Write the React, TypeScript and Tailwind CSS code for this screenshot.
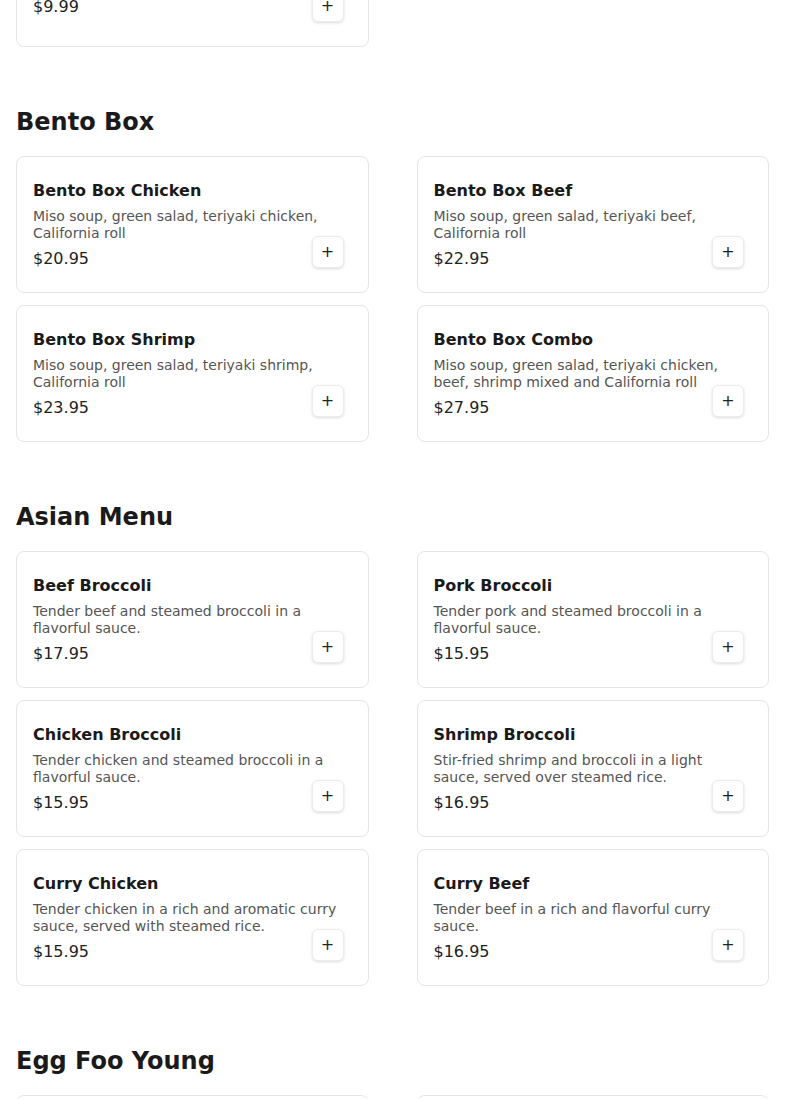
import React from 'react';

type Item = { name: string; desc: string; price: string };

const sections: { title: string; items: Item[] }[] = [
    {
        title: 'Bento Box',
        items: [
            { name: 'Bento Box Chicken', desc: 'Miso soup, green salad, teriyaki chicken, California roll', price: '$20.95' },
            { name: 'Bento Box Beef', desc: 'Miso soup, green salad, teriyaki beef, California roll', price: '$22.95' },
            { name: 'Bento Box Shrimp', desc: 'Miso soup, green salad, teriyaki shrimp, California roll', price: '$23.95' },
            { name: 'Bento Box Combo', desc: 'Miso soup, green salad, teriyaki chicken, beef, shrimp mixed and California roll', price: '$27.95' },
        ],
    },
    {
        title: 'Asian Menu',
        items: [
            { name: 'Beef Broccoli', desc: 'Tender beef and steamed broccoli in a flavorful sauce.', price: '$17.95' },
            { name: 'Pork Broccoli', desc: 'Tender pork and steamed broccoli in a flavorful sauce.', price: '$15.95' },
            { name: 'Chicken Broccoli', desc: 'Tender chicken and steamed broccoli in a flavorful sauce.', price: '$15.95' },
            { name: 'Shrimp Broccoli', desc: 'Stir-fried shrimp and broccoli in a light sauce, served over steamed rice.', price: '$16.95' },
            { name: 'Curry Chicken', desc: 'Tender chicken in a rich and aromatic curry sauce, served with steamed rice.', price: '$15.95' },
            { name: 'Curry Beef', desc: 'Tender beef in a rich and flavorful curry sauce.', price: '$16.95' },
        ],
    },
    {
        title: 'Egg Foo Young',
        items: [
            { name: 'Chicken Egg Foo Young', desc: 'Fluffy omelette with chicken and vegetables, topped with brown gravy.', price: '$14.95' },
            { name: 'Shrimp Egg Foo Young', desc: 'Fluffy omelette with shrimp and vegetables, topped with brown gravy.', price: '$15.95' },
        ],
    },
];

const MenuCard: React.FC<{ item: Item; last?: boolean }> = ({ item, last }) => (
    <div className={`relative rounded-lg border border-[#e5e5e5] bg-white px-4 pt-[22px] ${last ? 'pb-[27px]' : 'pb-[21px]'}`}>
        <h3 className="text-base leading-6 font-bold text-[#1a1a1a]">{item.name}</h3>
        <p className="mt-[5px] pr-2 text-sm leading-[17px] text-[#555555]">{item.desc}</p>
        <p className="mt-[5px] text-base leading-6 text-[#222222]">{item.price}</p>
        <button className="absolute right-6 bottom-6 flex h-8 w-8 items-center justify-center rounded-md border border-[#ececec] bg-white text-base leading-none text-[#222222] shadow-[0_1px_3px_rgba(0,0,0,0.14)]">
            +
        </button>
    </div>
);

export default function App() {
    return (
        <div className="min-h-screen overflow-hidden bg-white px-4 pb-10 font-['DejaVu_Sans',sans-serif]">
            <div className="-mt-[96px] grid grid-cols-2 gap-x-12">
                <MenuCard last item={{ name: 'Vegetable Lo Mein', desc: 'Soft egg noodles stir-fried with fresh mixed vegetables.', price: '$9.99' }} />
            </div>
            {sections.map(section => (
                <section key={section.title} className="mt-[57px]">
                    <h2 className="mb-4 text-2xl leading-9 font-bold text-[#1a1a1a]">{section.title}</h2>
                    <div className="grid grid-cols-2 gap-x-12 gap-y-3">
                        {section.items.map(item => (
                            <MenuCard key={item.name} item={item} />
                        ))}
                    </div>
                </section>
            ))}
        </div>
    );
}
